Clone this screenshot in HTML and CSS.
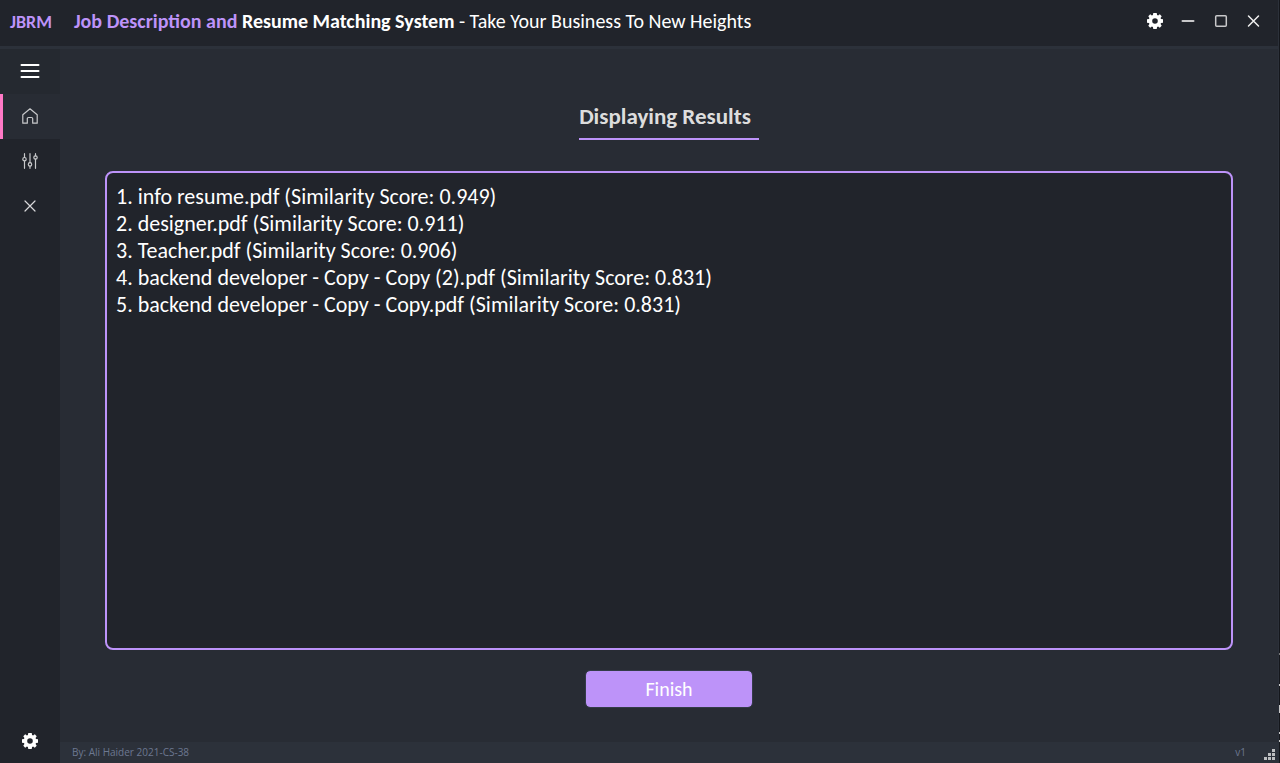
FILE: index.html
```html
<!DOCTYPE html>
<html lang="en">
<head>
<meta charset="utf-8">
<title>Job Description and Resume Matching System</title>
<link rel="stylesheet" href="styles.css">
</head>
<body>
<div class="window">
  <header class="titlebar">
    <strong class="brand">JBRM</strong>
    <h1 class="title"><b class="accent">Job Description and</b> <b>Resume Matching System</b> - Take Your Business To New Heights</h1>
    <div class="controls">
      <button class="control" aria-label="Settings"><svg width="16" height="16" viewBox="0 0 16 16"><use href="#gear"/></svg></button>
      <button class="control" aria-label="Minimize"><svg width="16" height="16" viewBox="0 0 16 16"><path d="M2.500 8h11" stroke="#c8c8ca" stroke-width="2" stroke-linecap="round"/></svg></button>
      <button class="control" aria-label="Maximize"><svg width="16" height="16" viewBox="0 0 16 16"><rect x="2.700" y="2.700" width="10.600" height="10.600" rx="1" fill="none" stroke="#c8c8ca" stroke-width="1.500"/></svg></button>
      <button class="control" aria-label="Close"><svg width="16" height="16" viewBox="0 0 16 16"><path d="M2.500 3l10 10M12.500 3l-10 10" stroke="#f0f0f0" stroke-width="1.500" stroke-linecap="round"/></svg></button>
    </div>
  </header>
  <nav class="sidebar" aria-label="Main">
    <button class="item toggle" aria-label="Toggle menu"><svg width="20" height="20" viewBox="0 0 20 20"><path d="M1.500 4h17M1.500 10h17M1.500 16h17" stroke="#fff" stroke-width="2" stroke-linecap="round"/></svg></button>
    <button class="item active" aria-label="Home"><svg width="16" height="16" viewBox="0 0 16 16"><path d="M.8 6.700L8 .8l7.200 5.900v8.500h-4.500v-4.500q0-1.200-1.200-1.200h-3q-1.200 0-1.200 1.200v4.500H.8z" fill="none" stroke="#c8c9cb" stroke-width="1.200" stroke-linejoin="round"/></svg></button>
    <button class="item" aria-label="Adjustments"><svg width="16" height="16" viewBox="0 0 16 16"><g fill="none" stroke="#c8c9cb" stroke-width="1.200" stroke-linecap="round"><path d="M2.500.7v3.800M2.500 8v7.300M8 .7v9M8 13.100v2.200M13.500.7v2M13.500 6.200v9.100"/><circle cx="2.500" cy="6.200" r="1.700"/><circle cx="8" cy="11.400" r="1.700"/><circle cx="13.500" cy="4.500" r="1.700"/></g></svg></button>
    <button class="item" aria-label="Exit"><svg width="16" height="16" viewBox="0 0 16 16"><path d="M3 3l10 10M13 3L3 13" stroke="#d8d8da" stroke-width="1.200" stroke-linecap="round"/></svg></button>
    <button class="item bottom" aria-label="Settings"><svg width="16" height="16" viewBox="0 0 16 16"><use href="#gear"/></svg></button>
  </nav>
  <main class="content">
    <h2 class="heading">Displaying Results</h2>
    <textarea class="results" readonly aria-label="Results">1. info resume.pdf (Similarity Score: 0.949)
2. designer.pdf (Similarity Score: 0.911)
3. Teacher.pdf (Similarity Score: 0.906)
4. backend developer - Copy - Copy (2).pdf (Similarity Score: 0.831)
5. backend developer - Copy - Copy.pdf (Similarity Score: 0.831)</textarea>
    <button class="finish">Finish</button>
  </main>
  <footer class="footer">
    <span>By: Ali Haider 2021-CS-38</span>
    <span class="version">v1</span>
    <svg class="grip" width="11" height="11" viewBox="0 0 11 11" fill="#bdbec0"><path d="M8 0h3v3H8zM4 4h3v3H4zM8 4h3v3H8zM0 8h3v3H0zM4 8h3v3H4zM8 8h3v3H8z"/></svg>
  </footer>
</div>
<svg class="edge" width="1" height="110" viewBox="0 0 1 110" aria-hidden="true"><path fill="#c8c8c8" d="M0 31h1v2H0zM0 52h1v8H0zM0 79h1v2H0zM0 87h1v2H0z"/><path fill="#777" d="M0 0h1v2H0z"/></svg>
<svg class="symbols" aria-hidden="true"><symbol id="gear" viewBox="0 0 16 16"><path fill="#fff" fill-rule="evenodd" d="M6.300 0h3.400l.4 2 1 .4L12.800 1.300l1.900 1.900-1.100 1.700.4 1 2 .4v3.400l-2 .4-.4 1 1.100 1.700-1.900 1.900-1.700-1.100-1 .4-.4 2H6.300l-.4-2-1-.4-1.700 1.100-1.900-1.900 1.100-1.700-.4-1-2-.4V6.300l2-.4.4-1-1.100-1.700 1.900-1.900 1.700 1.100 1-.4zM8 5.200a2.800 2.800 0 1 0 0 5.600 2.800 2.800 0 0 0 0-5.600z"/></symbol></svg>
</body>
</html>
```
FILE: styles.css
```css
* { box-sizing: border-box; }
body {
  margin: 0;
  background: #15171c;
  color: #fff;
  font-family: Carlito, Lato, sans-serif;
}
button {
  border: 0;
  padding: 0;
  background: none;
  color: inherit;
  font-family: inherit;
}
svg { display: block; }
.window {
  display: grid;
  grid-template: auto 1fr auto / 60px 1fr;
  min-height: 100vh;
  margin-right: 1px;
  border-right: 1px solid #2c313a;
  background: #282c34;
}
.titlebar {
  grid-column: 1 / -1;
  display: flex;
  align-items: center;
  height: 49px;
  padding: 0 16px 5px 10px;
  background: #21242b;
  border-bottom: 3px solid #2c313a;
}
.brand {
  width: 64px;
  padding-top: 2px;
  color: #bd93f9;
  font-size: 18px;
}
.title {
  flex: 1;
  margin: 0;
  font-size: 20px;
  font-weight: 400;
  white-space: nowrap;
}
.accent { color: #bd93f9; }
.controls { display: flex; gap: 17px; }
.sidebar {
  grid-row: 2 / 4;
  display: flex;
  flex-direction: column;
  background: #21242b;
}
.item {
  display: grid;
  place-items: center;
  height: 45px;
  padding-bottom: 2px;
}
.toggle { background: #252930; }
.active {
  background: #282c34;
  box-shadow: inset 3px 0 #ff79c6;
}
.bottom {
  margin-top: auto;
  padding-bottom: 0;
}
.content {
  display: flex;
  flex-direction: column;
  align-items: center;
  padding: 48px 45px 34px;
}
.heading {
  margin: 0 0 31px;
  padding: 0 8px 2px 0;
  border-bottom: 2px solid #bd93f9;
  color: #ddd;
  font-size: 23px;
  line-height: 39px;
}
.results {
  flex: 1;
  width: 100%;
  padding: 10px 9px;
  border: 2px solid #bd93f9;
  border-radius: 8px;
  outline: 0;
  resize: none;
  background: #21242b;
  color: #fff;
  font-family: inherit;
  font-size: 22px;
  line-height: 27px;
}
.finish {
  width: 168px;
  height: 38px;
  margin-top: 20px;
  border: 1px solid #343b48;
  border-radius: 5px;
  background: #bd93f9;
  background-clip: padding-box;
  font-size: 20px;
}
.footer {
  display: flex;
  align-items: center;
  height: 21px;
  padding: 0 3px 1px 12px;
  background: #2c313a;
  color: #6c7891;
  font: 10px "Open Sans", sans-serif;
}
.version { margin-left: auto; }
.grip {
  align-self: flex-end;
  margin: 0 0 2px 18px;
}
.edge { position: absolute; right: 0; bottom: 0; }
.symbols { position: absolute; width: 0; height: 0; }
```
